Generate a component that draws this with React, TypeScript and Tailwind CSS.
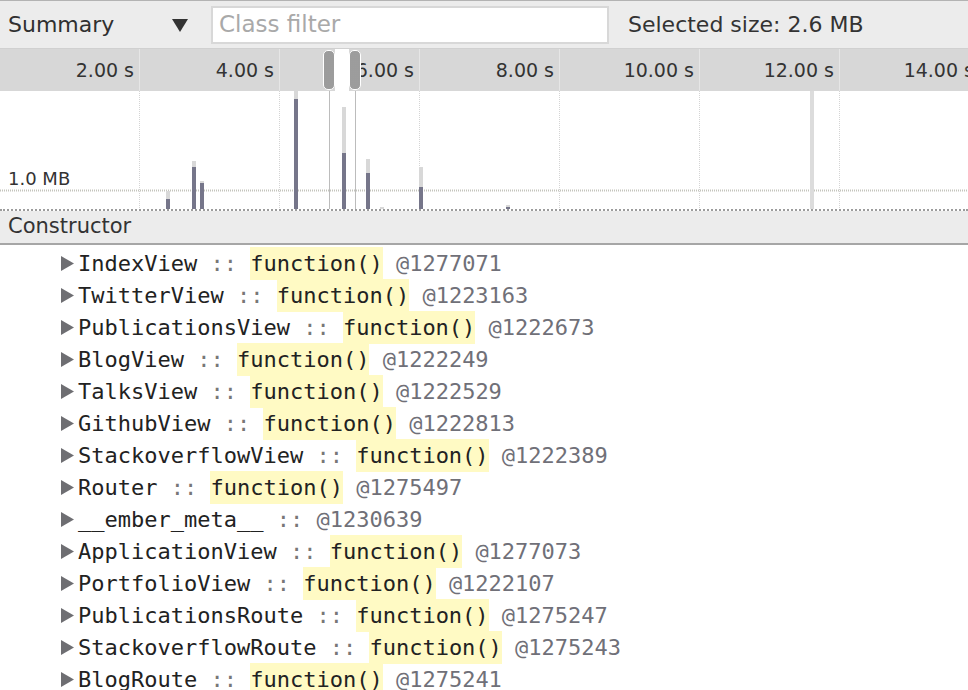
import React from 'react';

const rows = [
  { name: 'IndexView', fn: true, id: '@1277071' },
  { name: 'TwitterView', fn: true, id: '@1223163' },
  { name: 'PublicationsView', fn: true, id: '@1222673' },
  { name: 'BlogView', fn: true, id: '@1222249' },
  { name: 'TalksView', fn: true, id: '@1222529' },
  { name: 'GithubView', fn: true, id: '@1222813' },
  { name: 'StackoverflowView', fn: true, id: '@1222389' },
  { name: 'Router', fn: true, id: '@1275497' },
  { name: '__ember_meta__', fn: false, id: '@1230639' },
  { name: 'ApplicationView', fn: true, id: '@1277073' },
  { name: 'PortfolioView', fn: true, id: '@1222107' },
  { name: 'PublicationsRoute', fn: true, id: '@1275247' },
  { name: 'StackoverflowRoute', fn: true, id: '@1275243' },
  { name: 'BlogRoute', fn: true, id: '@1275241' },
];

const ticks = ['2.00 s', '4.00 s', '6.00 s', '8.00 s', '10.00 s', '12.00 s', '14.00 s'];

// bars: x, light top, dark top (page y), bottom at 209
const bars = [
  { x: 166, light: 191, dark: 199 },
  { x: 192, light: 161, dark: 167 },
  { x: 200, light: 181, dark: 183 },
  { x: 294, light: 91, dark: 99 },
  { x: 342, light: 107, dark: 153 },
  { x: 366, light: 159, dark: 173 },
  { x: 380, light: 207, dark: 209 },
  { x: 419, light: 167, dark: 187 },
  { x: 506, light: 205, dark: 207 },
];

const sans = { fontFamily: '"DejaVu Sans", Verdana, sans-serif' };
const mono = { fontFamily: '"DejaVu Sans Mono", "Liberation Mono", monospace' };

function Chart() {
  const top = 91;
  return (
    <svg width="968" height="118" className="block">
      {[139, 279, 419, 559, 699, 839].map((x) => (
        <line key={x} x1={x + 0.5} y1={0} x2={x + 0.5} y2={118} stroke="#d4d4d4" strokeDasharray="1 1" />
      ))}
      <line x1={0} y1={99.5} x2={968} y2={99.5} stroke="#c4c4bc" strokeWidth={2} strokeDasharray="1 1" />
      <rect x={810} y={0} width={4} height={118} fill="#dcdcdc" />
      <line x1={329.5} y1={0} x2={329.5} y2={118} stroke="#bcbcbc" />
      <line x1={355.5} y1={0} x2={355.5} y2={118} stroke="#bcbcbc" />
      {bars.map((b) => (
        <g key={b.x}>
          <rect x={b.x} y={b.light - top} width={4} height={209 - b.light} fill="#d8d8d8" />
          <rect x={b.x} y={b.dark - top} width={4} height={209 - b.dark} fill="#76768a" />
        </g>
      ))}
      <text x={8} y={94} fontSize={18} fill="#333" style={sans}>1.0 MB</text>
    </svg>
  );
}

function Handle() {
  return (
    <div className="w-[12px] h-[40px] rounded-[5px] border border-white bg-[#a9a9a9] bg-[radial-gradient(#8d8d8d_0.6px,transparent_0.8px)] bg-[length:2px_2px]" />
  );
}

export default function App() {
  return (
    <div className="w-[968px] h-[690px] overflow-hidden bg-white text-[#303030]" style={sans}>
      {/* toolbar */}
      <div className="h-[49px] flex items-center bg-[#ececec] border-t border-[#b3b3b3] border-b border-b-[#d0d0d0]">
        <span className="pl-[8px] text-[22px] w-[170px]">Summary</span>
        <svg width="16" height="14" className="ml-[2px]">
          <polygon points="0,1 16,1 8,14" fill="#333" />
        </svg>
        <div className="ml-[23px] w-[398px] h-[38px] bg-white border-2 border-[#d8d8d8] flex items-center pl-[6px] text-[23px] text-[#a9a9a9]">
          Class filter
        </div>
        <span className="ml-[19px] text-[22px] text-[#333]">Selected size: 2.6 MB</span>
      </div>

      {/* ruler */}
      <div className="relative h-[42px] bg-[#d7d7d7] flex overflow-hidden">
        {ticks.map((t) => (
          <div
            key={t}
            className="shrink-0 w-[140px] h-full border-r border-[#e6e6e6] flex items-center justify-end pr-[5px] text-[19px] text-[#333] whitespace-nowrap"
          >
            {t}
          </div>
        ))}
        <div className="absolute left-[323px] top-0 h-full flex items-center">
          <Handle />
          <div className="w-[14px] h-full bg-white" />
          <Handle />
        </div>
      </div>

      {/* chart */}
      <div className="h-[120px] border-b-2 border-dotted border-[#9c9c9c]">
        <Chart />
      </div>

      {/* constructor header */}
      <div className="h-[34px] flex items-center bg-[#ececec] border-b-2 border-[#a6a6a6] pl-[8px] text-[21px] text-[#333]">
        Constructor
      </div>

      {/* rows */}
      <div className="pt-[2px]" style={mono}>
        {rows.map((r) => (
          <div key={r.name} className="h-[32px] flex items-center pl-[61px] text-[22px] whitespace-pre">
            <svg width="13" height="15" className="mr-[4px]">
              <polygon points="0,0 13,7.5 0,15" fill="#6e6e72" />
            </svg>
            <span className="text-[#222]">{r.name}</span>
            <span className="text-[#777]"> :: </span>
            {r.fn && (
              <>
                <span className="bg-[#fffac4] text-[#222]">function()</span>
                <span> </span>
              </>
            )}
            <span className="text-[#707078]">{r.id}</span>
          </div>
        ))}
      </div>
    </div>
  );
}
